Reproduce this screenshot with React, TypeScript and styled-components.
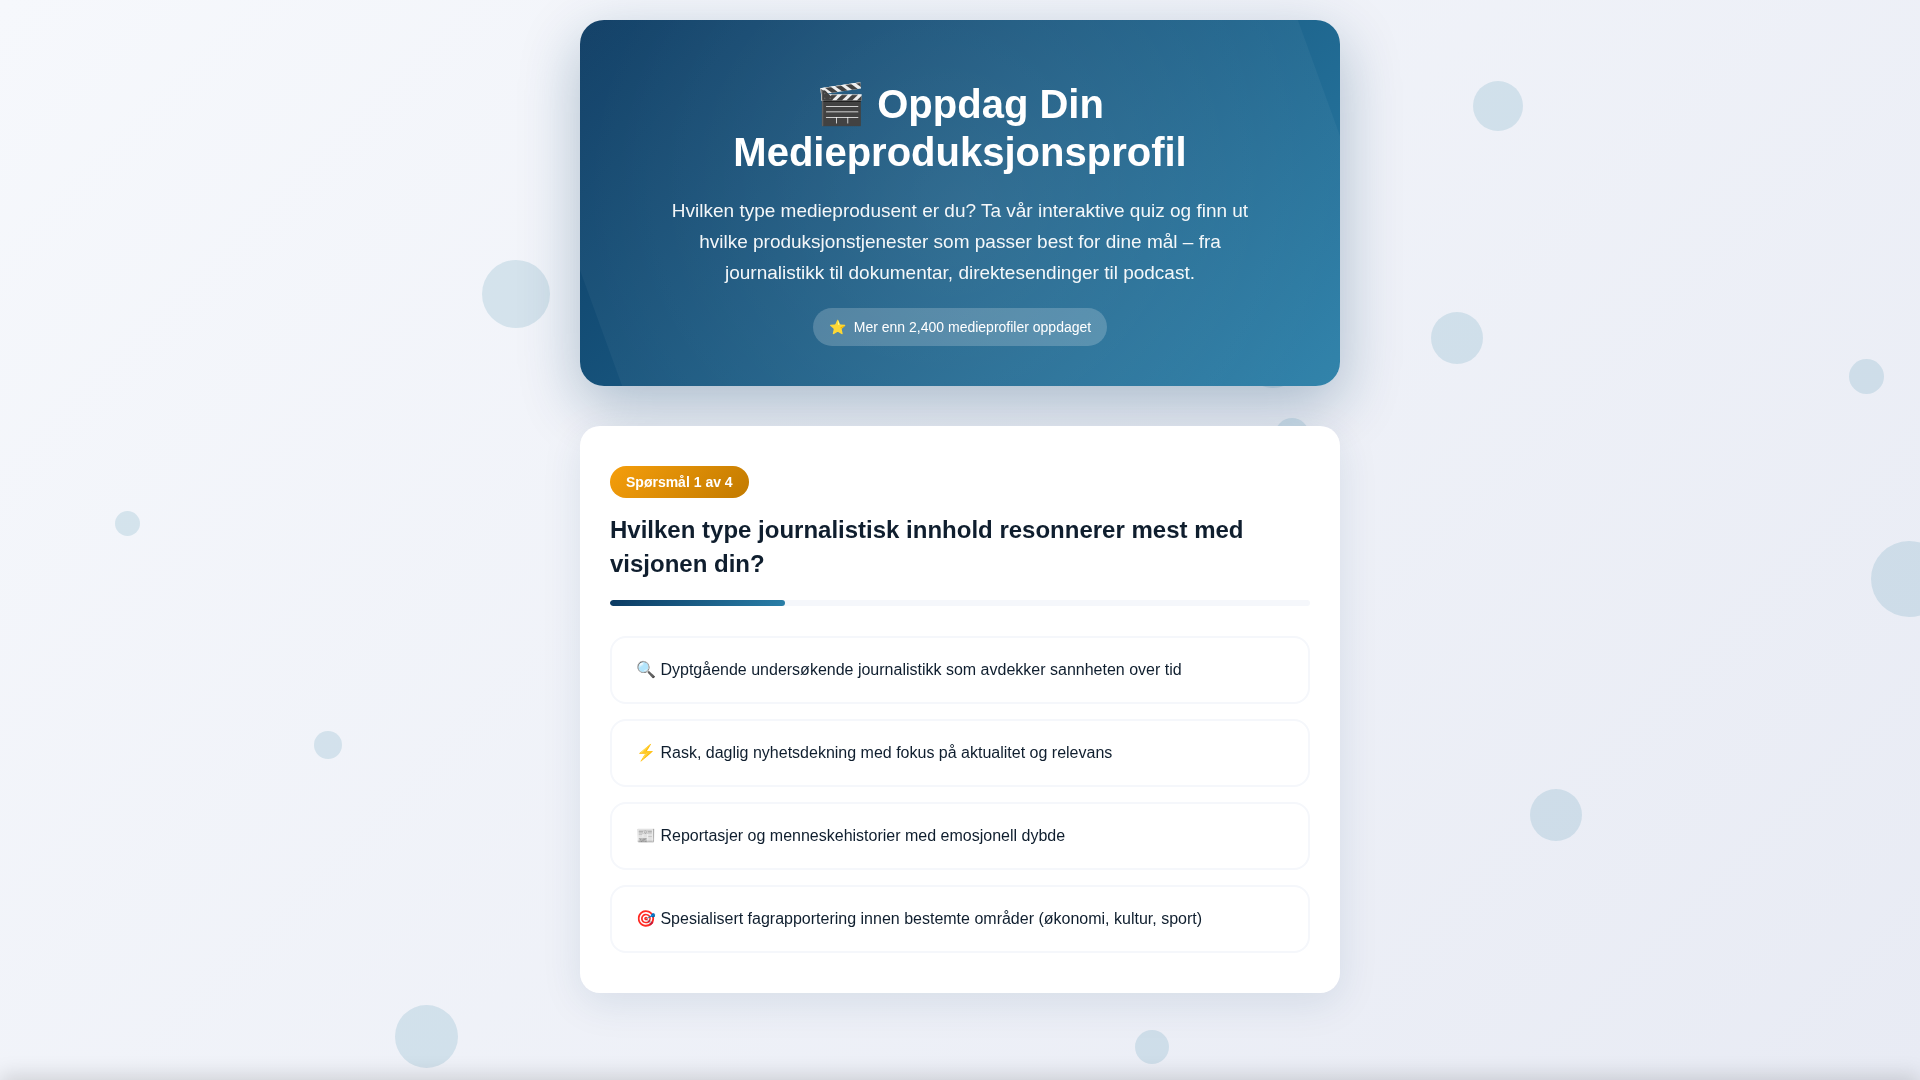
import React, { useState } from "react";
import styled, { createGlobalStyle } from "styled-components";

const GlobalStyle = createGlobalStyle`
  * { box-sizing: border-box; margin: 0; padding: 0; }
  body {
    min-height: 100vh;
    overflow: hidden;
    background: linear-gradient(135deg, #f6f8fc 0%, #e8ebf4 100%) fixed;
    color: #0f1e2e;
    font-family: "Liberation Sans", Arial, sans-serif;
    font-size: 16px;
    line-height: 26px;
  }
`;

const Page = styled.main`
  position: relative;
  z-index: 1;
  max-width: 800px;
  margin: 0 auto;
  padding: 20px;
  display: flex;
  flex-direction: column;
  gap: 40px;
`;

const Particles = styled.div`
  position: fixed;
  inset: 0;
  overflow: hidden;
  pointer-events: none;
`;

const Particle = styled.span<{ $x: number; $y: number; $size: number }>`
  position: absolute;
  left: ${(p) => p.$x}px;
  top: ${(p) => p.$y}px;
  width: ${(p) => p.$size}px;
  height: ${(p) => p.$size}px;
  border-radius: 50%;
  background: rgba(42, 127, 160, 0.15);
`;

const Hero = styled.header`
  position: relative;
  overflow: hidden;
  display: flex;
  flex-direction: column;
  align-items: center;
  padding: 60px 40px 40px;
  border-radius: 24px;
  background: linear-gradient(135deg, #0b3a62 0%, #2a7fa8 100%);
  box-shadow: 0 20px 60px rgba(11, 58, 98, 0.3);
  color: #ffffff;
  text-align: center;

  &::before {
    content: "";
    position: absolute;
    left: 0;
    top: -50%;
    width: 100%;
    height: 200%;
    background: radial-gradient(circle, rgba(255, 255, 255, 0.1) 0%, rgba(255, 255, 255, 0.04) 70%);
    transform: rotate(-20deg);
  }

  > * { position: relative; }
`;

const Title = styled.h1`
  font-size: 40px;
  line-height: 48px;
  font-weight: 700;
  margin-bottom: 19px;
`;

const Lead = styled.p`
  max-width: 600px;
  margin-bottom: 20px;
  font-size: 19px;
  line-height: 31px;
  opacity: 0.95;
`;

const ProofPill = styled.div`
  display: flex;
  align-items: center;
  gap: 8px;
  padding: 8px 16px;
  border-radius: 20px;
  background: rgba(255, 255, 255, 0.2);
  font-size: 14px;
  line-height: 22px;
`;

const QuizCard = styled.section`
  position: relative;
  padding: 40px 30px;
  border-radius: 20px;
  background: #ffffff;
  box-shadow: 0 10px 40px rgba(11, 58, 98, 0.1);
`;

const StepBadge = styled.span`
  display: block;
  width: fit-content;
  padding: 5px 16px;
  margin-bottom: 15px;
  border-radius: 16px;
  background: linear-gradient(135deg, #f59e0b 0%, #c27a00 100%);
  color: #ffffff;
  font-size: 14px;
  line-height: 22px;
  font-weight: 700;
`;

const Question = styled.h2`
  margin-bottom: 19px;
  font-size: 24px;
  line-height: 34px;
  font-weight: 700;
`;

const ProgressTrack = styled.div`
  height: 6px;
  margin-bottom: 30px;
  border-radius: 3px;
  overflow: hidden;
  background: #f5f7fb;
`;

const ProgressFill = styled.div`
  height: 100%;
  border-radius: 3px;
  background: linear-gradient(135deg, #0b3a62 0%, #2a7fa8 100%);
`;

const Options = styled.div`
  display: flex;
  flex-direction: column;
  gap: 15px;
`;

const Option = styled.button<{ $selected: boolean }>`
  padding: 20px 24px;
  border: 2px solid ${(p) => (p.$selected ? "#2a7fa8" : "#f5f7fb")};
  border-radius: 16px;
  background: #ffffff;
  color: inherit;
  font: inherit;
  line-height: 24px;
  text-align: left;
  cursor: pointer;
`;

const BottomBar = styled.div`
  position: fixed;
  left: 0;
  right: 0;
  bottom: 0;
  height: 80px;
  background: #ffffff;
  box-shadow: 0 -4px 20px rgba(0, 0, 0, 0.15);
  transform: translateY(100%);
`;

const particles = [
  { x: 1473, y: 81, size: 50 },
  { x: 1431, y: 312, size: 52 },
  { x: 1849, y: 359, size: 35 },
  { x: 482, y: 260, size: 68 },
  { x: 115, y: 511, size: 25 },
  { x: 395, y: 1005, size: 63 },
  { x: 1135, y: 1030, size: 34 },
  { x: 314, y: 731, size: 28 },
  { x: 1530, y: 789, size: 52 },
  { x: 1871, y: 541, size: 76 },
  { x: 1243, y: 328, size: 60 },
  { x: 1275, y: 418, size: 34 },
];

const options = [
  "🔍 Dyptgående undersøkende journalistikk som avdekker sannheten over tid",
  "⚡ Rask, daglig nyhetsdekning med fokus på aktualitet og relevans",
  "📰 Reportasjer og menneskehistorier med emosjonell dybde",
  "🎯 Spesialisert fagrapportering innen bestemte områder (økonomi, kultur, sport)",
];

const step = 1;
const totalSteps = 4;

export default function App() {
  const [selected, setSelected] = useState<number | null>(null);

  return (
    <>
      <GlobalStyle />
      <Particles aria-hidden="true">
        {particles.map((p) => (
          <Particle key={`${p.x}-${p.y}`} $x={p.x} $y={p.y} $size={p.size} />
        ))}
      </Particles>
      <Page>
        <Hero>
          <Title>🎬 Oppdag Din Medieproduksjonsprofil</Title>
          <Lead>
            Hvilken type medieprodusent er du? Ta vår interaktive quiz og finn ut hvilke
            produksjonstjenester som passer best for dine mål – fra journalistikk til dokumentar,
            direktesendinger til podcast.
          </Lead>
          <ProofPill>
            <span>⭐</span>
            <span>Mer enn 2,400 medieprofiler oppdaget</span>
          </ProofPill>
        </Hero>
        <QuizCard>
          <StepBadge>
            Spørsmål {step} av {totalSteps}
          </StepBadge>
          <Question>Hvilken type journalistisk innhold resonnerer mest med visjonen din?</Question>
          <ProgressTrack>
            <ProgressFill style={{ width: `${(step / totalSteps) * 100}%` }} />
          </ProgressTrack>
          <Options>
            {options.map((label, i) => (
              <Option
                key={label}
                type="button"
                $selected={selected === i}
                aria-pressed={selected === i}
                onClick={() => setSelected(i)}
              >
                {label}
              </Option>
            ))}
          </Options>
        </QuizCard>
      </Page>
      <BottomBar />
    </>
  );
}
